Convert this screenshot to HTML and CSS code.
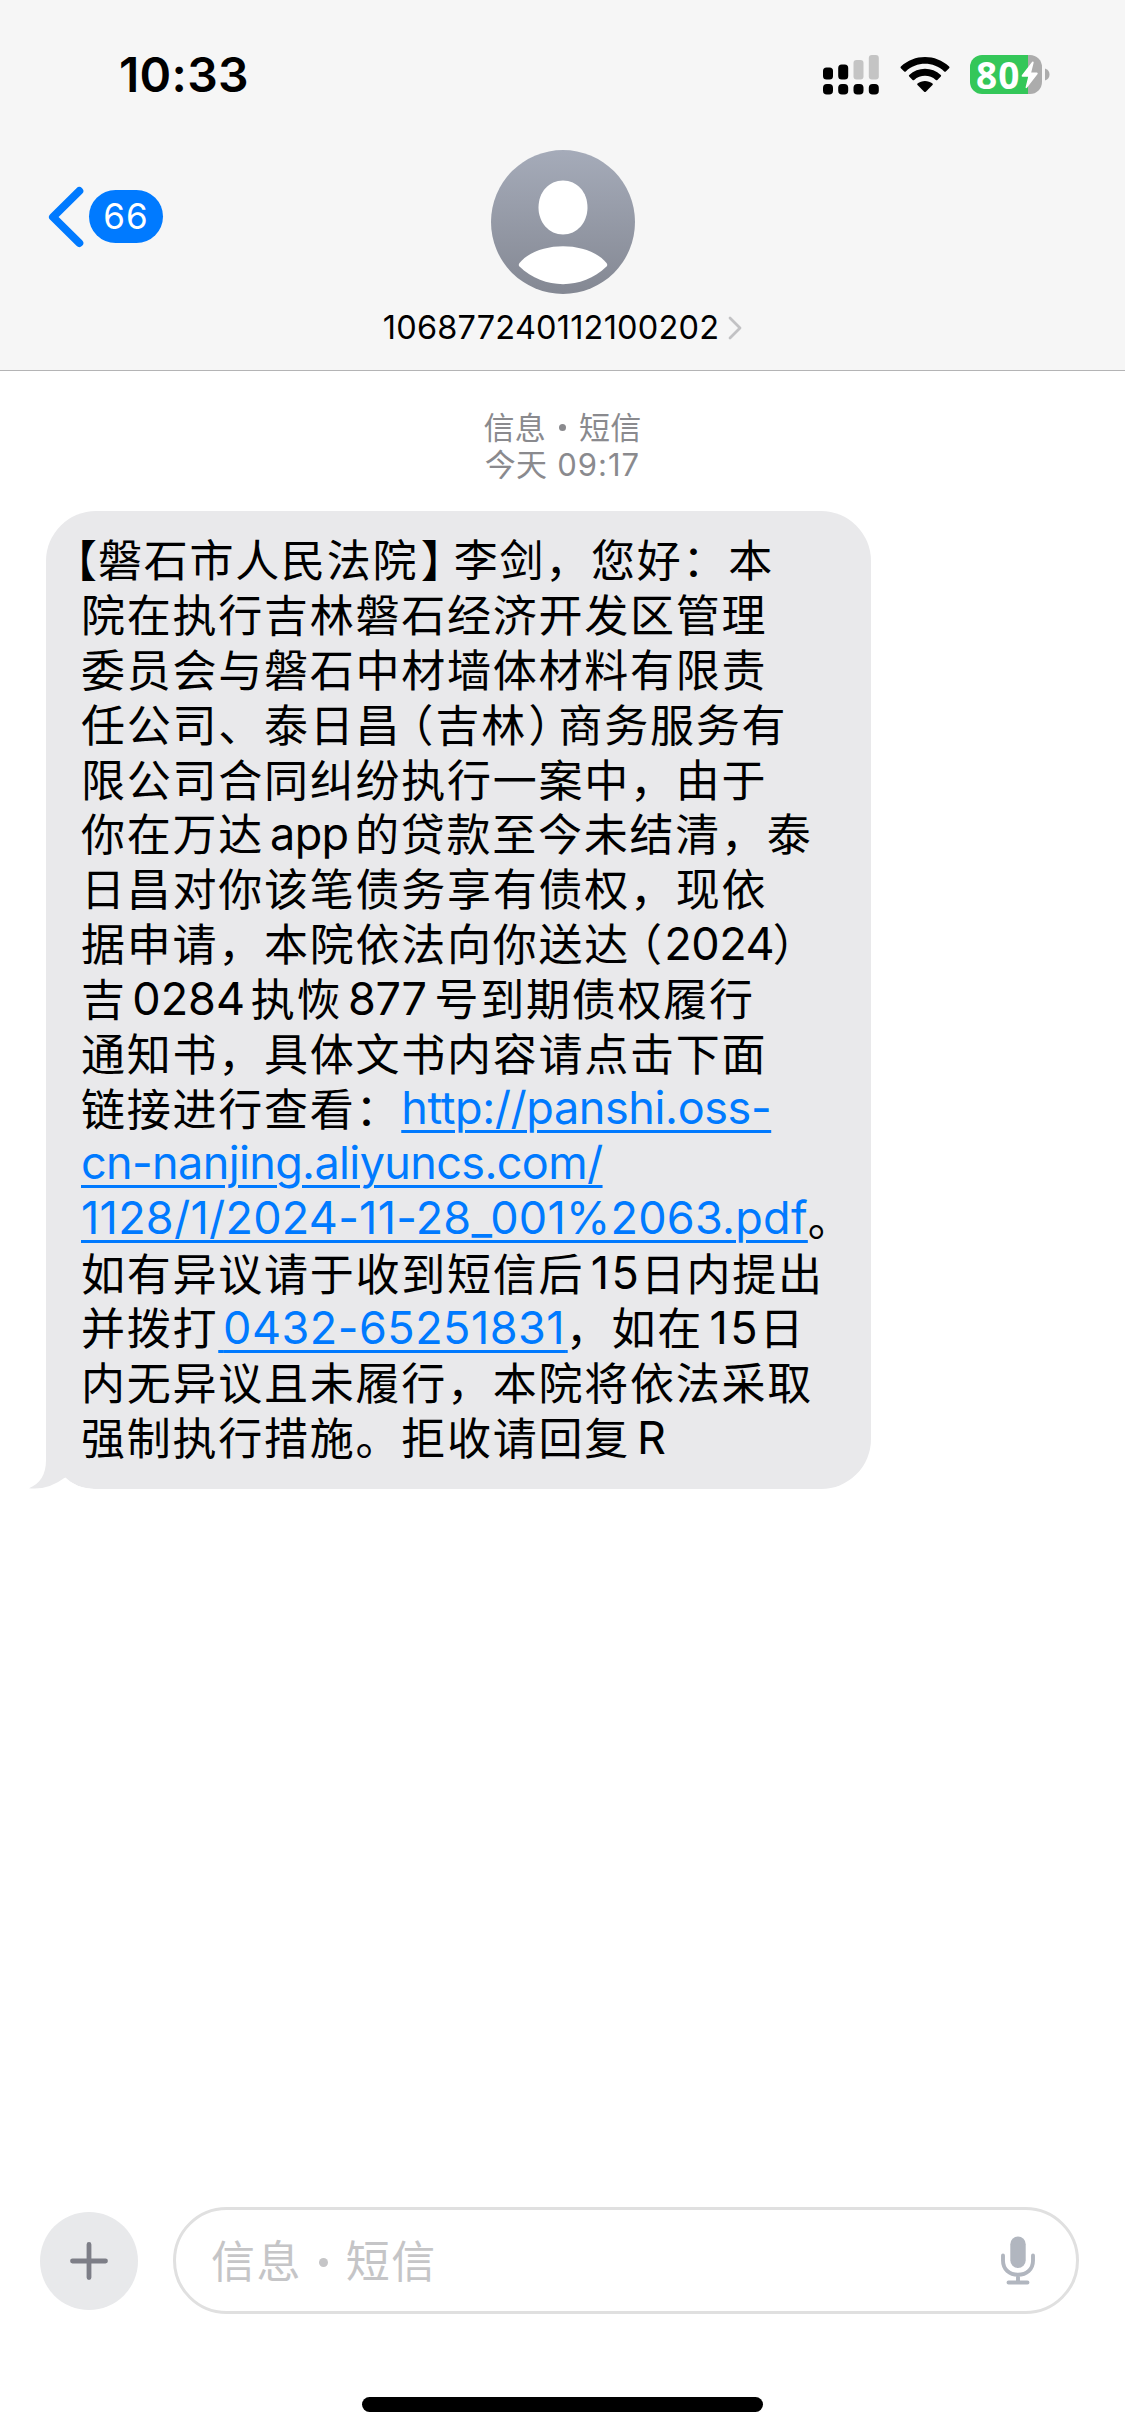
FILE: index.html
```
<!DOCTYPE html>
<html lang="zh-CN">
<head>
<meta charset="utf-8">
<title>信息</title>
<link rel="stylesheet" href="styles.css">
</head>
<body>
<div class="screen">
  <header class="header">
    <div class="status">
      <span class="clock">10:33</span>
      <div class="indicators">
        <svg class="signal" width="58" height="42" viewBox="0 0 58 42">
          <g fill="#000">
            <rect x="1" y="13.500" width="10" height="12" rx="3.500"/>
            <rect x="16.200" y="10.500" width="10" height="15" rx="3.500"/>
            <rect x="1" y="30" width="10" height="10.500" rx="3.800"/>
            <rect x="16.200" y="30" width="10" height="10.500" rx="3.800"/>
            <rect x="31.500" y="30" width="10" height="10.500" rx="3.800"/>
            <rect x="46.800" y="30" width="10" height="10.500" rx="3.800"/>
          </g>
          <g fill="#c4c4c4">
            <rect x="31.500" y="6" width="10" height="19.500" rx="3"/>
            <rect x="46.800" y="1" width="10" height="24.500" rx="3"/>
          </g>
        </svg>
        <svg class="wifi" width="50" height="38" viewBox="0 0 50 38">
          <path d="M0.900 10.500C14.300-2.300 35.700-2.300 49.100 10.500Q49.900 11.300 49.100 12.200L45.800 15.400Q45 16.100 44.200 15.400C33.500 5.300 16.500 5.300 5.800 15.400Q5 16.100 4.200 15.400L0.900 12.200Q0.100 11.300 0.900 10.500Z"/>
          <path d="M9.200 19C18 10.700 32 10.700 40.800 19Q41.600 19.800 40.800 20.600L37.400 23.900Q36.600 24.600 35.800 23.900C29.700 18.400 20.300 18.400 14.200 23.900Q13.400 24.600 12.600 23.900L9.200 20.600Q8.400 19.800 9.200 19Z"/>
          <path d="M17.500 27.500C21.700 24 28.300 24 32.500 27.500Q33.300 28.300 32.500 29.100L25.800 35.700Q25 36.400 24.200 35.700L17.500 29.100Q16.700 28.300 17.500 27.500Z"/>
        </svg>
        <div class="battery">
          <div class="cell">
            <span class="level">80</span>
            <svg class="bolt" width="18" height="28" viewBox="0 0 18 28"><path d="M11.200 0.800L0.800 14.300Q0.200 15.500 1.400 15.700H7.200L4.600 26.200Q4.700 27.700 6 26.800L16.600 12.900Q17.200 11.600 15.900 11.400H10.200L12.700 1.500Q12.500 0 11.200 0.800Z" fill="#fff"/></svg>
          </div>
          <svg class="tip" width="5" height="13" viewBox="0 0 5 13"><path d="M0 0.500C6 2 6 11 0 12.500Z" fill="#acacac"/></svg>
        </div>
      </div>
    </div>
    <div class="nav">
      <div class="back">
        <svg width="36" height="62" viewBox="0 0 36 62"><path d="M31.300 5L5 31L31.300 57" fill="none" stroke="#007aff" stroke-width="8" stroke-linecap="round" stroke-linejoin="round"/></svg>
        <span class="unread">66</span>
      </div>
      <div class="contact">
        <svg class="avatar" width="144" height="144" viewBox="0 0 144 144">
          <defs><linearGradient id="tone" x1="0" y1="0" x2="0" y2="1"><stop offset="0" stop-color="#a5abb9"/><stop offset="1" stop-color="#848893"/></linearGradient></defs>
          <circle cx="72" cy="72" r="72" fill="url(#tone)"/>
          <path d="M72 30.500C86 30.500 96.500 42 96.500 57.500C96.500 72.500 86 84.500 72 84.500C58 84.500 47.500 72.500 47.500 57.500C47.500 42 58 30.500 72 30.500Z" fill="#fff"/>
          <path d="M28.500 113C47 90.500 97 90.500 115.500 113Q117 115 115.500 116.500C91 140 53 140 28.500 116.500Q27 115 28.500 113Z" fill="#fff"/>
        </svg>
        <div class="number">
          <span>106877240112100202</span>
          <svg width="14" height="24" viewBox="0 0 14 24"><path d="M2 2L12 12L2 22" fill="none" stroke="#c2c2c4" stroke-width="2.800" stroke-linecap="round" stroke-linejoin="round"/></svg>
        </div>
      </div>
    </div>
  </header>

  <main class="thread">
    <div class="stamp">
      <div class="service">信息<span class="dot"></span>短信</div>
      <div class="when">今天<span class="time">09:17</span></div>
    </div>
    <div class="bubble">
      <svg class="tail" width="38" height="64" viewBox="0 0 38 64"><path d="M17 0V35C17 50 11 58.500 0 63.300Q19 65.500 36 52.500L38 0Z" fill="#e9e9eb"/></svg>
      <svg class="notch" width="48" height="13" viewBox="0 0 48 13"><path d="M0 12.500Q12 10 19.500 1.500Q30 12.500 48 13L0 13Z" fill="#fff"/></svg>
      <div class="line"><span class="open-lens">【</span>磐石市人民法院<span class="close-lens">】</span>李剑，您好：本</div>
      <div class="line">院在执行吉林磐石经济开发区管理</div>
      <div class="line">委员会与磐石中材墙体材料有限责</div>
      <div class="line">任公司、泰日昌<span class="open-paren">（</span>吉林<span class="close-paren">）</span>商务服务有</div>
      <div class="line">限公司合同纠纷执行一案中，由于</div>
      <div class="line">你在万达<span class="latin word">app</span>的贷款至今未结清，泰</div>
      <div class="line">日昌对你该笔债务享有债权，现依</div>
      <div class="line">据申请，本院依法向你送达<span class="open-paren">（</span><span class="latin year">2024</span>）</div>
      <div class="line">吉<span class="latin case-no">0284</span>执恢<span class="latin ref-no">877</span>号到期债权履行</div>
      <div class="line">通知书，具体文书内容请点击下面</div>
      <div class="line">链接进行查看：<a class="latin link-host">http://panshi.oss-</a></div>
      <div class="line"><a class="latin link-domain">cn-nanjing.aliyuncs.com/</a></div>
      <div class="line"><a class="latin link-file">1128/1/2024-11-28_001%2063.pdf</a>。</div>
      <div class="line">如有异议请于收到短信后<span class="latin days">15</span>日内提出</div>
      <div class="line">并拨打<a class="latin link-phone"><span class="lead">&nbsp;</span>0432-65251831<span class="trail">&nbsp;</span></a><span class="tight">，</span>如在<span class="latin days">15</span>日</div>
      <div class="line">内无异议且未履行，本院将依法采取</div>
      <div class="line">强制执行措施。拒收请回复<span class="latin reply">R</span></div>
    </div>
  </main>

  <footer class="footer">
    <div class="composer">
      <div class="add"><svg width="38" height="38" viewBox="0 0 38 38"><path d="M19 2.500V35.500M2.500 19H35.500" stroke="#7d7e87" stroke-width="4.800" stroke-linecap="round"/></svg></div>
      <div class="field">
        <span class="hint">信息<span class="dot"></span>短信</span>
        <svg width="34" height="49" viewBox="0 0 34 49"><rect x="9.300" y="0.500" width="15.400" height="31.500" rx="7.700" fill="#b1b6bf"/><path d="M2 19.500V24.500C2 33.500 8.500 38.800 17 38.800S32 33.500 32 24.500V19.500M17 39V46M7.500 46.500H26.500" fill="none" stroke="#b1b6bf" stroke-width="3.900" stroke-linecap="round"/></svg>
      </div>
    </div>
    <div class="home"></div>
  </footer>
</div>
</body>
</html>
```
FILE: styles.css
```
body {
  margin: 0;
  background: #fff;
  color: #000;
  font-family: Inter, "Noto Sans CJK SC", sans-serif;
}
svg { display: block; flex: none; }

.screen {
  width: 1125px;
  height: 2435px;
  display: flex;
  flex-direction: column;
}

/* status bar and contact header */
.header {
  box-sizing: border-box;
  height: 371px;
  background: #f6f6f6;
  border-bottom: 1px solid #b4b4b5;
}
.status {
  display: flex;
  justify-content: space-between;
  height: 150px;
  padding: 0 75px 0 119px;
}
.clock {
  margin-top: 46px;
  font-size: 48px;
  font-weight: 600;
  line-height: 58px;
  letter-spacing: 0.3px;
}
.indicators { display: flex; align-items: flex-start; }
.signal { margin-top: 54px; }
.wifi { margin: 56px 0 0 20px; }
.battery { display: flex; align-items: center; gap: 3px; margin: 55px 0 0 20px; }
.cell {
  display: flex;
  align-items: center;
  box-sizing: border-box;
  width: 72px;
  height: 39px;
  padding-left: 6px;
  border-radius: 12px;
  background: linear-gradient(to right, #34c759 58px, #acacac 58px);
}
.level {
  width: 45px;
  color: #fff;
  font: 700 37px/39px "Open Sans", sans-serif;
  letter-spacing: 1.2px;
}
.nav {
  display: grid;
  grid-template-columns: 1fr 400px 1fr;
}
.back { display: flex; align-items: flex-start; gap: 5px; padding: 36px 0 0 48px; }
.unread {
  width: 74px;
  height: 53px;
  margin-top: 4px;
  border-radius: 26.5px;
  background: #007aff;
  color: #fff;
  font-size: 35px;
  line-height: 53px;
  letter-spacing: 1px;
  text-align: center;
}
.contact { display: flex; flex-direction: column; align-items: center; }
.number {
  display: flex;
  align-items: center;
  gap: 9px;
  margin-top: 14px;
  font-size: 32.500px;
  line-height: 40px;
  letter-spacing: 0.2px;
}

/* conversation */
.thread { flex: 1; }
.stamp {
  padding-top: 36px;
  color: #8a8a8e;
  font: 400 31px/37px "Noto Sans CJK SC", sans-serif;
  letter-spacing: 0.2px;
}
.service, .when {
  display: flex;
  justify-content: center;
  height: 37px;
}
.service { align-items: center; }
.when { align-items: baseline; }
.stamp .dot { width: 7px; height: 7px; margin: 3px 13px 0; }
.dot { border-radius: 50%; background: currentColor; }
.time {
  margin-left: 10px;
  font-family: Inter, sans-serif;
  letter-spacing: 1px;
}

.bubble {
  position: relative;
  box-sizing: border-box;
  width: 825px;
  height: 978px;
  margin: 30px 0 0 46px;
  padding: 20px 0 0 35px;
  border-radius: 50px;
  background: #e9e9eb;
}
.tail { position: absolute; left: -17px; bottom: 0; }
.notch { position: absolute; left: 0; bottom: 0; }
.line {
  position: relative;
  height: 54.9px;
  font: 400 44px/54.9px "Noto Sans CJK SC", sans-serif;
  letter-spacing: 1.75px;
  white-space: nowrap;
}
.latin {
  display: inline-block;
  font: 400 45px/50px Inter, sans-serif;
  letter-spacing: 0;
  vertical-align: 1.5px;
}
a.latin {
  color: #007aff;
  text-decoration: underline;
  text-decoration-thickness: 3px;
  text-underline-offset: 6px;
}
.open-lens { margin: 0 -0.75px 0 -28px; }
.close-lens { margin: 0 -12.65px 0 2.4px; }
.open-paren { margin: 0 0.5px 0 -12px; }
.close-paren { margin: 0 -15.75px 0 1.5px; }
.word { width: 85px; padding-left: 6px; letter-spacing: -0.6px; }
.year { letter-spacing: -0.4px; margin-right: -1.5px; }
.case-no { width: 118.5px; padding-left: 5.5px; }
.ref-no { width: 86.5px; padding-left: 5.7px; letter-spacing: -0.3px; }
.days { width: 50px; padding-left: 6.5px; letter-spacing: 2.5px; }
.reply { padding-left: 7px; }
.link-host { letter-spacing: -0.4px; }
.link-domain { letter-spacing: -0.63px; }
.link-file { letter-spacing: 0.26px; }
.link-phone { letter-spacing: 0.48px; }
.lead { letter-spacing: -7.8px; }
.trail { letter-spacing: -10px; }
.tight { margin-left: -2px; }

/* message composer */
.footer { height: 228px; }
.composer { display: flex; align-items: center; gap: 35px; padding-left: 40px; }
.add {
  display: flex;
  align-items: center;
  justify-content: center;
  width: 98px;
  height: 98px;
  border-radius: 50%;
  background: #e8e9eb;
}
.field {
  display: flex;
  align-items: center;
  justify-content: space-between;
  box-sizing: border-box;
  width: 906px;
  height: 107px;
  padding: 0 41px 0 35px;
  border: 3px solid #e0e0e0;
  border-radius: 54px;
}
.hint {
  display: flex;
  align-items: center;
  margin-bottom: 3px;
  color: #c5c5c7;
  font: 400 44px/60px "Noto Sans CJK SC", sans-serif;
  letter-spacing: 1.4px;
}
.hint .dot { width: 9px; height: 9px; margin: 7px 18px 0 17px; }
.home {
  width: 401px;
  height: 15px;
  margin: 83px auto 0;
  border-radius: 7.5px;
  background: #000;
}
```
